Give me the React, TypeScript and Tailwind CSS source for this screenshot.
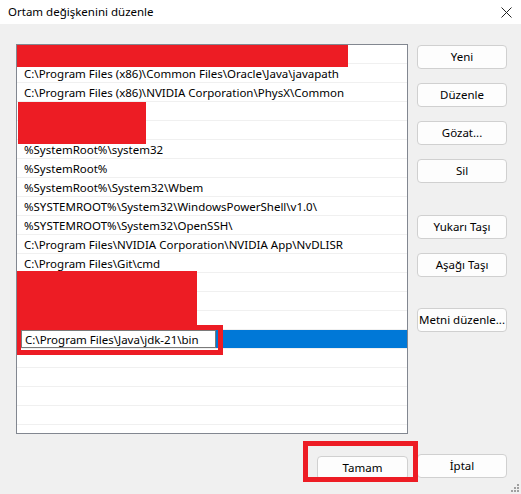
import React from "react";

const ROWS: string[] = [
  "",
  "C:\\Program Files (x86)\\Common Files\\Oracle\\Java\\javapath",
  "C:\\Program Files (x86)\\NVIDIA Corporation\\PhysX\\Common",
  "",
  "",
  "%SystemRoot%\\system32",
  "%SystemRoot%",
  "%SystemRoot%\\System32\\Wbem",
  "%SYSTEMROOT%\\System32\\WindowsPowerShell\\v1.0\\",
  "%SYSTEMROOT%\\System32\\OpenSSH\\",
  "C:\\Program Files\\NVIDIA Corporation\\NVIDIA App\\NvDLISR",
  "C:\\Program Files\\Git\\cmd",
  "",
  "",
  "",
  "__edit__",
  "",
  "",
  "",
  "",
  "",
];

function Btn({ label, className = "" }: { label: string; className?: string }) {
  return (
    <button
      className={`h-[24px] w-[90px] whitespace-nowrap rounded-[4px] border border-[#d0d0d0] bg-[#fdfdfd] px-0 text-[11.5px] leading-none text-black ${className}`}
    >
      {label}
    </button>
  );
}

export default function App() {
  return (
    <div
      className="relative flex h-[494px] w-[521px] flex-col overflow-hidden bg-[#f0f0f0] text-black"
      style={{ fontFamily: '"Noto Sans", "Open Sans", sans-serif' }}
    >
      {/* title bar */}
      <div className="flex h-[24px] shrink-0 items-center justify-between bg-white pl-[8px] pr-[8px]">
        <span className="text-[11.5px]">Ortam değişkenini düzenle</span>
        <svg width="11" height="11" viewBox="0 0 11 11" className="mr-[1px]">
          <path d="M0.5 0.5 L10.5 10.5 M10.5 0.5 L0.5 10.5" stroke="#222" strokeWidth="1" />
        </svg>
      </div>

      {/* body */}
      <div className="flex pl-[16px] pt-[20px]">
        {/* list */}
        <div className="relative h-[390px] w-[392px] overflow-hidden border border-[#828790] bg-white">
          {ROWS.map((r, i) =>
            r === "__edit__" ? (
              <div key={i} className="flex h-[19px] border-b border-[#f0f0f0]">
                <div className="ml-[4px] w-[195px] shrink-0 border border-[#7a7a7a] bg-white pl-[3px] text-[11.5px] leading-[17px] whitespace-nowrap">
                  C:\Program Files\Java\jdk-21\bin
                </div>
                <div className="flex-1 bg-[#0078d7]" />
              </div>
            ) : (
              <div
                key={i}
                className="h-[19px] border-b border-[#f0f0f0] pl-[7px] text-[11.5px] leading-[19px] whitespace-nowrap"
              >
                {r}
              </div>
            )
          )}

          {/* redactions */}
          <div className="absolute left-[-1px] top-[-1px] h-[23px] w-[332px] bg-[#ed1c24]" />
          <div className="absolute left-[1px] top-[57px] h-[42px] w-[128px] bg-[#ed1c24]" />
          <div className="absolute left-[-1px] top-[226px] h-[55px] w-[181px] bg-[#ed1c24]" />
          <div className="absolute left-[-1px] top-[280px] h-[30px] w-[207px] border-[5px] border-[#ed1c24]" />
        </div>

        {/* side buttons */}
        <div className="ml-[9px] flex flex-col gap-[14px] pt-[1px]">
          <Btn label="Yeni" />
          <Btn label="Düzenle" />
          <Btn label="Gözat..." />
          <Btn label="Sil" />
          <Btn label="Yukarı Taşı" className="mt-[18px]" />
          <Btn label="Aşağı Taşı" />
          <Btn label="Metni düzenle..." className="mt-[17px]" />
        </div>
      </div>

      {/* footer */}
      <div className="flex justify-end gap-[9px] pr-[14px] pt-[20px]">
        <div className="relative">
          <Btn label="Tamam" className="w-[91px]" />
          <div className="absolute left-[-14px] top-[-13px] h-[41px] w-[115px] border-[5px] border-[#ed1c24]" />
        </div>
        <Btn label="İptal" className="w-[89px]" />
      </div>

      {/* resize grip */}
      <svg width="10" height="10" viewBox="0 0 10 10" className="absolute bottom-[2px] right-[2px]">
        {[
          [8, 0],
          [8, 3],
          [5, 3],
          [8, 6],
          [5, 6],
          [2, 6],
        ].map(([x, y], i) => (
          <rect key={i} x={x} y={y + 2} width="2" height="2" fill="#a0a0a0" />
        ))}
      </svg>
    </div>
  );
}
